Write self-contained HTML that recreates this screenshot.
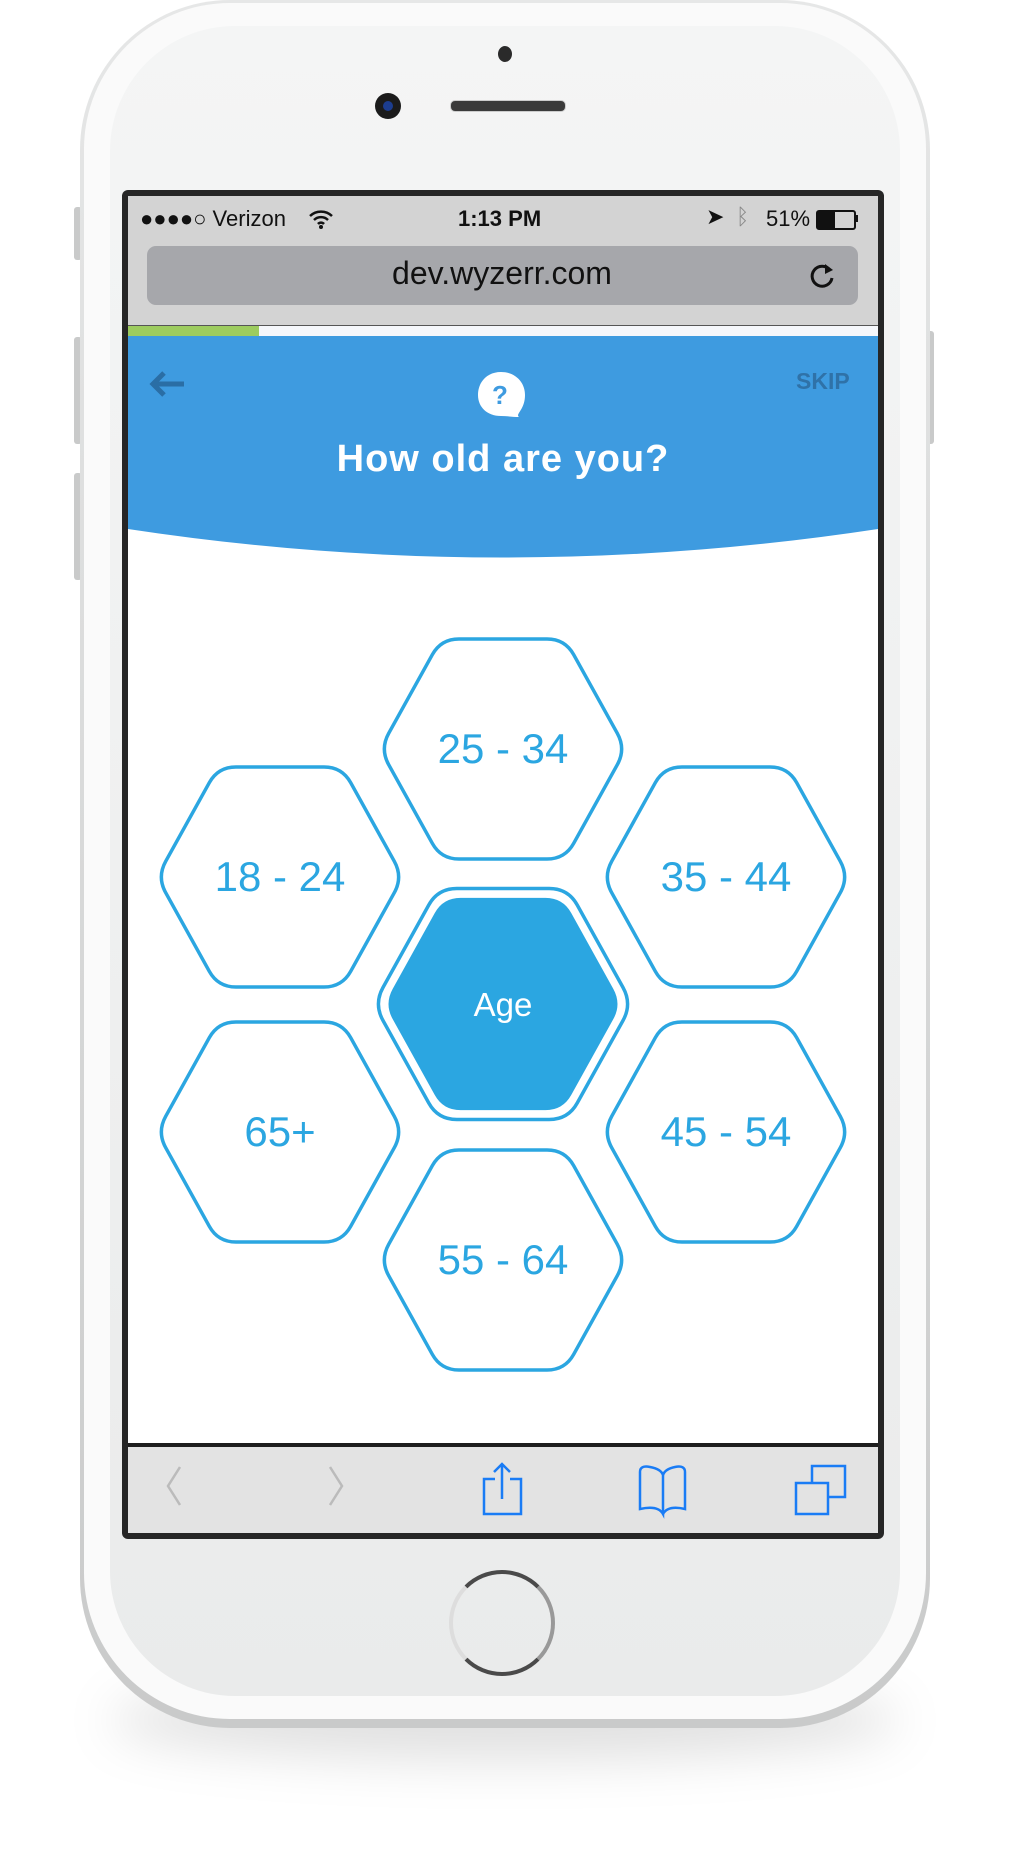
<!DOCTYPE html>
<html><head><meta charset="utf-8"><style>
html,body{margin:0;padding:0;background:#fff;}
body{width:1010px;height:1858px;position:relative;overflow:hidden;font-family:"Liberation Sans",sans-serif;}
.abs{position:absolute;}
</style></head><body>
<div class="abs" style="left:110px;top:1680px;width:790px;height:80px;border-radius:50%;background:rgba(0,0,0,0.12);filter:blur(25px);"></div>
<div class="abs" style="left:74px;top:207px;width:8px;height:53px;background:#c9caca;border-radius:3px;"></div>
<div class="abs" style="left:74px;top:337px;width:8px;height:107px;background:#c9caca;border-radius:3px;"></div>
<div class="abs" style="left:74px;top:473px;width:8px;height:107px;background:#c9caca;border-radius:3px;"></div>
<div class="abs" style="left:926px;top:331px;width:8px;height:113px;background:#c9caca;border-radius:3px;"></div>
<div class="abs" style="left:80px;top:0;width:850px;height:1728px;border-radius:150px;background:linear-gradient(#e6e7e7,#c9caca);"></div>
<div class="abs" style="left:84px;top:3px;width:842px;height:1716px;border-radius:146px;background:#fafafa;"></div>
<div class="abs" style="left:110px;top:26px;width:790px;height:1670px;border-radius:125px;background:linear-gradient(#f4f5f5,#eaebeb);"></div>
<div class="abs" style="left:498px;top:46px;width:14px;height:16px;border-radius:50%;background:#2a2a2a;"></div>
<div class="abs" style="left:375px;top:93px;width:26px;height:26px;border-radius:50%;background:#1b1b1b;"></div>
<div class="abs" style="left:383px;top:101px;width:10px;height:10px;border-radius:50%;background:#1c3d8f;"></div>
<div class="abs" style="left:450px;top:100px;width:114px;height:10px;border-radius:5px;background:#3a3a3a;border:1px solid #ccc;"></div>
<div class="abs" style="left:122px;top:190px;width:762px;height:1349px;background:#262626;border-radius:6px;"></div>
<div class="abs" style="left:128px;top:196px;width:750px;height:1337px;background:#fff;overflow:hidden;">
  <div class="abs" style="left:0;top:0;width:750px;height:130px;background:#d3d3d3;"></div>
  <div class="abs" style="left:12px;top:10px;font-size:22px;color:#111;">●●●●○ Verizon</div>
  <svg class="abs" style="left:180px;top:12px" width="26" height="22" viewBox="0 0 26 22"><path d="M2 8a16 16 0 0 1 22 0M6 12a10 10 0 0 1 14 0M10 16a4 4 0 0 1 6 0" stroke="#111" stroke-width="2.5" fill="none"/><circle cx="13" cy="19" r="2" fill="#111"/></svg>
  <div class="abs" style="left:330px;top:10px;font-size:22px;color:#111;font-weight:bold;">1:13 PM</div>
  <div class="abs" style="left:578px;top:8px;font-size:22px;color:#111;">➤</div>
  <div class="abs" style="left:608px;top:8px;font-size:22px;color:#888;">ᛒ</div>
  <div class="abs" style="left:638px;top:10px;font-size:22px;color:#111;">51%</div>
  <div class="abs" style="left:688px;top:14px;width:36px;height:16px;border:2px solid #111;border-radius:3px;"><div style="width:17px;height:16px;background:#111"></div></div>
  <div class="abs" style="left:727px;top:19px;width:3px;height:7px;background:#111;"></div>
  <div class="abs" style="left:19px;top:50px;width:711px;height:59px;background:#a6a7ab;border-radius:9px;"></div>
  <div class="abs" style="left:19px;top:59px;width:600px;text-align:center;font-size:32px;color:#111;padding-left:55px;">dev.wyzerr.com</div>
  <svg class="abs" style="left:680px;top:64px" width="30" height="32" viewBox="0 0 30 32"><path d="M22 10A10 10 0 1 0 24 18" stroke="#111" stroke-width="3" fill="none"/><path d="M17 4L25 10L17 14Z" fill="#111"/></svg>
  <div class="abs" style="left:0;top:129px;width:750px;height:2px;background:#555;"></div>
  <div class="abs" style="left:0;top:130px;width:750px;height:10px;background:#f5f7fb;"></div>
  <div class="abs" style="left:0;top:130px;width:131px;height:10px;background:#9dcc5f;"></div>
  <svg class="abs" style="left:0;top:140px" width="750" height="225" viewBox="0 0 750 225"><path d="M0 0H750V193Q375 250 0 193Z" fill="#3e9be0"/></svg>
  <svg class="abs" style="left:20px;top:173px" width="40" height="30" viewBox="0 0 40 30"><path d="M36 15H6M16 4L5 15L16 26" stroke="#2a6ea5" stroke-width="5" fill="none"/></svg>
  <div class="abs" style="left:668px;top:172px;font-size:23px;font-weight:bold;color:#2f72a8;">SKIP</div>
  <svg class="abs" style="left:345px;top:172px" width="56" height="56" viewBox="0 0 56 56"><path d="M28 4C14 4 5 14 5 27C5 39 14 48 28 48C34 48 40 49 46 49C42 46 52 42 52 27C52 14 42 4 28 4Z" fill="#fff"/><text x="27" y="36" text-anchor="middle" font-size="26" font-weight="bold" fill="#3e9be0" font-family="Liberation Sans">?</text></svg>
  <div class="abs" style="left:0;top:242px;width:750px;text-align:center;font-size:38px;color:#fff;font-weight:bold;letter-spacing:1px;">How old are you?</div>
  <div class="abs" style="left:0;top:1247px;width:750px;height:4px;background:#1e1e1e;"></div>
  <div class="abs" style="left:0;top:1251px;width:750px;height:86px;background:#e3e3e3;"></div>
  <svg class="abs" style="left:0;top:1251px" width="750" height="86" viewBox="0 0 750 86">
    <path d="M52 20L40 39L52 58" stroke="#bbb" stroke-width="2.5" fill="none"/>
    <path d="M202 20L214 39L202 58" stroke="#bbb" stroke-width="2.5" fill="none"/>
    <g stroke="#1a7cf5" stroke-width="2.5" fill="none">
      <path d="M367 32H356V67H393V32H382"/><path d="M374 52V17M366 25L374 17L382 25"/>
      <path d="M512 62V25Q512 18 522 20Q533 22 535 28V67Q530 58 512 62Z"/><path d="M535 28Q537 22 547 20Q557 18 557 25V62Q540 58 535 67"/>
      <path d="M668 36V67H700V36Z"/><path d="M684 36V19H717V50H700"/>
    </g>
  </svg>
</div>
<svg class="abs" style="left:0;top:0" width="1010" height="1858" viewBox="0 0 1010 1858">
  <defs>
    <path id="hx" d="M -114.3,-15.7 L -70.7,-94.3 Q -62,-110 -44,-110 L 44,-110 Q 62,-110 70.7,-94.3 L 114.3,-15.7 Q 123,0 114.3,15.7 L 70.7,94.3 Q 62,110 44,110 L -44,110 Q -62,110 -70.7,94.3 L -114.3,15.7 Q -123,0 -114.3,-15.7 Z"/>
  </defs>
  <g fill="#fff" stroke="#2ba6e1" stroke-width="3.5">
    <use href="#hx" transform="translate(503,749)"/>
    <use href="#hx" transform="translate(280,877)"/>
    <use href="#hx" transform="translate(726,877)"/>
    <use href="#hx" transform="translate(280,1132)"/>
    <use href="#hx" transform="translate(726,1132)"/>
    <use href="#hx" transform="translate(503,1260)"/>
    <use href="#hx" transform="translate(503,1004) scale(1.05)" stroke-width="3.3"/>
  </g>
  <use href="#hx" transform="translate(503,1004) scale(0.965)" fill="#2ba6e1"/>
  <g font-family="Liberation Sans" font-size="42" fill="#2ba6e1" text-anchor="middle">
    <text x="503" y="763">25 - 34</text>
    <text x="280" y="891">18 - 24</text>
    <text x="726" y="891">35 - 44</text>
    <text x="280" y="1146">65+</text>
    <text x="726" y="1146">45 - 54</text>
    <text x="503" y="1274">55 - 64</text>
    <text x="503" y="1016" fill="#fff" font-size="33">Age</text>
  </g>
</svg>
<div class="abs" style="left:449px;top:1570px;width:106px;height:106px;border-radius:50%;border:4px solid #4a4a4a;box-sizing:border-box;border-left-color:#ddd;border-right-color:#999;"></div>
</body></html>
